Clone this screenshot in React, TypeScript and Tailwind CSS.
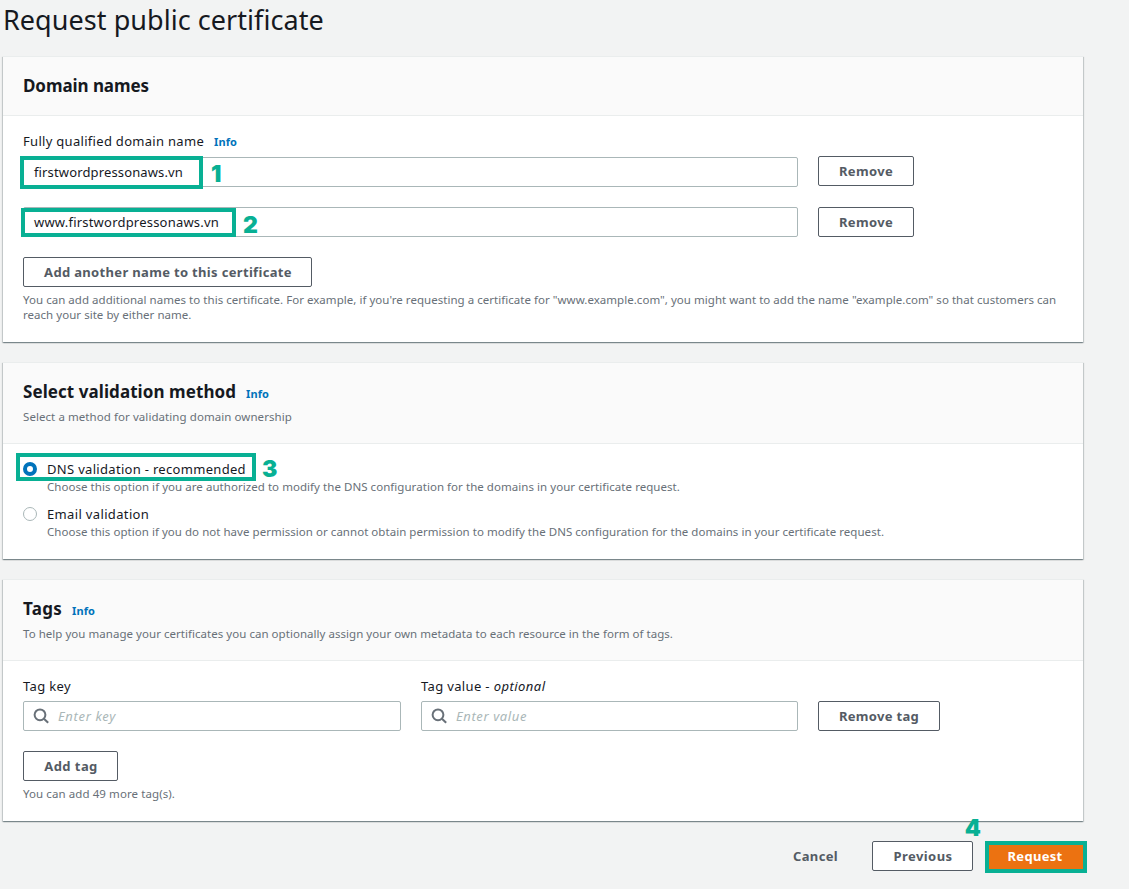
import React from "react";
import clsx from "clsx";

type WithChildren = { children?: React.ReactNode; className?: string };

function Panel({ children, className }: WithChildren) {
  return (
    <section
      className={clsx(
        "w-[1080px] border-t border-[#eaeded] bg-white shadow-[0_1px_1px_0_rgba(0,28,36,0.3),1px_1px_1px_0_rgba(0,28,36,0.15),-1px_1px_1px_0_rgba(0,28,36,0.15)]",
        className,
      )}
    >
      {children}
    </section>
  );
}

function PanelHeader({ children, className }: WithChildren) {
  return (
    <header className={clsx("flex flex-col border-b border-[#eaeded] bg-[#fafafa] px-5", className)}>
      {children}
    </header>
  );
}

function Info({ className }: { className?: string }) {
  return (
    <a className={clsx("text-[11px] leading-5 font-bold tracking-[0.12px] text-[#0073bb]", className)}>
      Info
    </a>
  );
}

function Button({ children, className }: WithChildren) {
  return (
    <button
      className={clsx(
        "flex h-[30px] shrink-0 items-center justify-center rounded-[2px] border border-[#545b64] bg-white text-[13px] leading-5 font-bold text-[#545b64]",
        className,
      )}
    >
      {children}
    </button>
  );
}

function Mark({ children, className }: WithChildren) {
  return (
    <span
      className={clsx(
        "absolute font-['Inter',sans-serif] text-[23px] leading-[23px] font-black text-[#08b094]",
        className,
      )}
    >
      {children}
    </span>
  );
}

function Frame({ className }: { className: string }) {
  return <div className={clsx("pointer-events-none absolute border-4 border-[#08b094]", className)} />;
}

function SearchField({ placeholder, className }: { placeholder: string; className: string }) {
  return (
    <div className="flex h-[30px] items-center gap-[9px] rounded-[2px] border border-[#aab7b8] bg-white pl-[9px]">
      <svg width="16" height="16" viewBox="0 0 16 16" fill="none" stroke="#687078" strokeWidth="2">
        <circle cx="7" cy="6.8" r="5.4" />
        <path d="M10.9 10.7 15.2 14.8" />
      </svg>
      <span className={clsx("text-[13px] leading-5 text-[#aab7b8] italic", className)}>{placeholder}</span>
    </div>
  );
}

export default function App() {
  return (
    <main className="flex h-[889px] w-[1129px] flex-col overflow-hidden bg-[#f2f3f3] pl-[3px] font-['Noto_Sans',sans-serif] text-[#16191f]">
      <h1 className="h-[56px] text-[27px] leading-[40px] tracking-[0.05px] whitespace-nowrap">
        Request public certificate
      </h1>

      <Panel className="h-[286px]">
        <PanelHeader className="h-[59px] justify-center">
          <h2 className="text-[17px] leading-[22px] font-bold tracking-[-0.07px]">Domain names</h2>
        </PanelHeader>
        <div className="flex flex-col items-start px-5 pt-[15px]">
          <div className="flex h-[26px] gap-[10px]">
            <label className="text-[13px] leading-5 tracking-[0.3px]">Fully qualified domain name</label>
            <Info className="mt-px" />
          </div>
          <div className="relative flex items-start gap-5">
            <div className="flex h-[30px] w-[775px] items-center rounded-[2px] border border-[#aab7b8] pl-[10px] text-[13px] leading-5 tracking-[0.14px]">
              firstwordpressonaws.vn
            </div>
            <Button className="-mt-px w-24 tracking-[0.33px]">Remove</Button>
            <Frame className="-top-px -left-[3px] h-[33px] w-[183px]" />
            <Mark className="top-[6px] left-[188px]">1</Mark>
          </div>
          <div className="relative mt-5 flex items-start gap-5">
            <div className="flex h-[30px] w-[775px] items-center rounded-[2px] border border-[#aab7b8] pl-[10px] text-[13px] leading-5 tracking-[0.21px]">
              www.firstwordpressonaws.vn
            </div>
            <Button className="w-24 tracking-[0.33px]">Remove</Button>
            <Frame className="top-[1px] -left-[2px] h-[29px] w-[215px]" />
            <Mark className="top-[7px] left-[220px]">2</Mark>
          </div>
          <Button className="mt-5 w-[289px] pl-px tracking-[0.33px]">Add another name to this certificate</Button>
          <p className="mt-[5px] text-[11.5px] leading-[15px] tracking-[0.035px] whitespace-nowrap text-[#687078]">
            You can add additional names to this certificate. For example, if you're requesting a certificate for
            "www.example.com", you might want to add the name "example.com" so that customers can
            <br />
            reach your site by either name.
          </p>
        </div>
      </Panel>

      <Panel className="mt-5 h-[197px]">
        <PanelHeader className="h-[81px] pt-[18px]">
          <div className="flex gap-[10px]">
            <h2 className="text-[17px] leading-[22px] font-bold tracking-[0.07px]">Select validation method</h2>
            <Info className="mt-[3px] -mb-px" />
          </div>
          <p className="mt-[5px] text-[11.5px] leading-[18px] tracking-[0.07px] text-[#687078]">
            Select a method for validating domain ownership
          </p>
        </PanelHeader>
        <div className="flex flex-col gap-[10px] px-5 pt-[15px]">
          <div className="relative flex gap-[10px]">
            <span className="mt-[3px] size-[14px] rounded-full border-4 border-[#0073bb] bg-white" />
            <div className="flex flex-col">
              <span className="text-[13px] leading-5 tracking-[0.31px]">DNS validation - recommended</span>
              <span className="text-[11.5px] leading-[15px] tracking-[0.048px] text-[#687078]">
                Choose this option if you are authorized to modify the DNS configuration for the domains in your
                certificate request.
              </span>
            </div>
            <Frame className="-top-[6px] -left-[7px] h-[28px] w-[240px]" />
            <Mark className="-top-px left-[239px]">3</Mark>
          </div>
          <div className="flex gap-[10px]">
            <span className="mt-[3px] size-[14px] rounded-full border border-[#aab7b8] bg-white" />
            <div className="flex flex-col">
              <span className="text-[13px] leading-5 tracking-[0.35px]">Email validation</span>
              <span className="text-[11.5px] leading-[15px] tracking-[0.037px] text-[#687078]">
                Choose this option if you do not have permission or cannot obtain permission to modify the DNS
                configuration for the domains in your certificate request.
              </span>
            </div>
          </div>
        </div>
      </Panel>

      <Panel className="mt-5 h-[242px]">
        <PanelHeader className="h-[81px] pt-[18px]">
          <div className="flex gap-[10px]">
            <h2 className="text-[17px] leading-[22px] font-bold tracking-[0.27px]">Tags</h2>
            <Info className="mt-[3px] -mb-px" />
          </div>
          <p className="mt-[5px] text-[11.5px] leading-[18px] tracking-[0.037px] text-[#687078]">
            To help you manage your certificates you can optionally assign your own metadata to each resource in the
            form of tags.
          </p>
        </PanelHeader>
        <div className="flex flex-col items-start px-5 pt-[15px]">
          <div className="flex items-end gap-5">
            <div className="flex w-[378px] flex-col gap-[5px]">
              <label className="text-[13px] leading-5 tracking-[0.35px]">Tag key</label>
              <SearchField placeholder="Enter key" className="tracking-[0.66px]" />
            </div>
            <div className="flex w-[377px] flex-col gap-[5px]">
              <label className="text-[13px] leading-5 tracking-[0.35px]">
                Tag value - <i className="tracking-[0.48px]">optional</i>
              </label>
              <SearchField placeholder="Enter value" className="tracking-[0.6px]" />
            </div>
            <Button className="w-[122px] tracking-[0.3px]">Remove tag</Button>
          </div>
          <Button className="mt-5 w-[95px] pl-px tracking-[0.45px]">Add tag</Button>
          <p className="mt-[5px] text-[11.5px] leading-[15px] tracking-[0.086px] text-[#687078]">
            You can add 49 more tag(s).
          </p>
        </div>
      </Panel>

      <footer className="relative mt-5 flex w-[1080px] items-center justify-end">
        <button className="mr-[34px] text-[13px] leading-5 font-bold tracking-[0.34px] text-[#545b64]">
          Cancel
        </button>
        <Button className="w-[101px] pl-px tracking-[0.43px]">Previous</Button>
        <button className="ml-[14px] flex h-[30px] w-24 items-center justify-center rounded-[2px] bg-[#ec7211] text-[13px] leading-5 font-bold tracking-[0.3px] text-white">
          Request
        </button>
        <Frame className="top-0 -right-1 h-8 w-[102px]" />
        <Mark className="-top-6 right-[102px]">4</Mark>
      </footer>
    </main>
  );
}
